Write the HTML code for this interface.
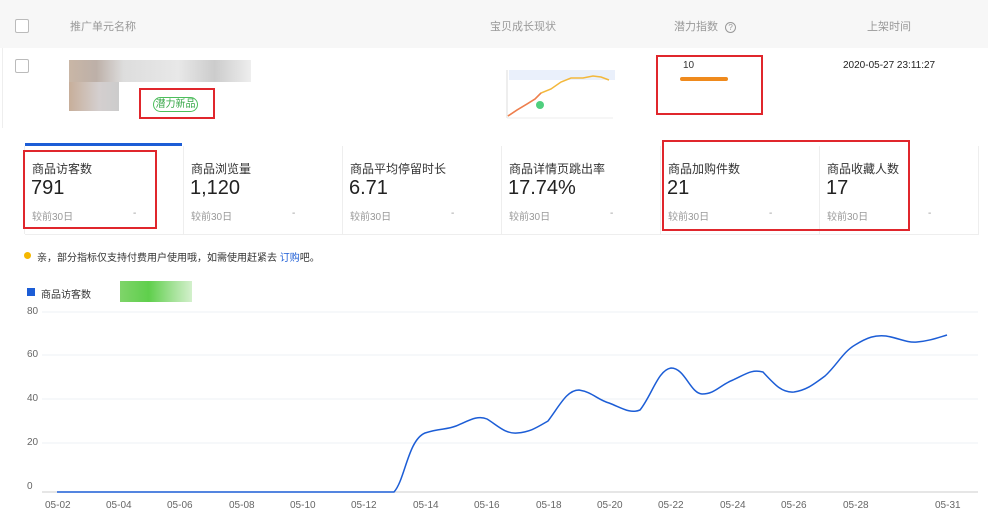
<!DOCTYPE html>
<html><head><meta charset="utf-8"><style>
body{margin:0;width:988px;height:525px;background:#fff;font-family:"Liberation Sans","Noto Sans CJK SC",sans-serif;position:relative;overflow:hidden;color:#333}
.a{position:absolute}
.cb{position:absolute;width:12px;height:12px;border:1px solid #bbb;border-radius:2px;background:#fff}
.h{font-size:11px;color:#999}
.card{position:absolute;top:146px;height:88px;width:158px;border-right:1px solid #eee;border-bottom:1px solid #eee}
.card .t{position:absolute;left:7px;top:14px;font-size:12px;color:#333}
.card .v{position:absolute;left:6px;top:31px;font-size:20px;color:#222}
.card .c{position:absolute;left:7px;top:62px;font-size:10px;color:#999}
.card .d{position:absolute;left:108px;top:62px;font-size:10px;color:#999}
.red{position:absolute;border:2px solid #e0262c}
.yl{position:absolute;left:27px;font-size:10px;color:#666}
.xl{position:absolute;top:500px;font-size:10px;color:#666}
</style></head><body>
<div class="a" style="left:0;top:0;width:988px;height:48px;background:#f7f7f7"></div>
<div class="a" style="left:2px;top:48px;width:1px;height:80px;background:#eee"></div>
<div class="cb" style="left:15px;top:19px"></div>
<div class="a h" style="left:70px;top:18px">推广单元名称</div>
<div class="a h" style="left:490px;top:18px">宝贝成长现状</div>
<div class="a h" style="left:674px;top:18px">潜力指数 <span style="display:inline-block;width:9px;height:9px;border:1px solid #999;border-radius:50%;font-size:8px;line-height:9px;text-align:center;margin-left:4px">?</span></div>
<div class="a h" style="left:867px;top:18px">上架时间</div>
<div class="cb" style="left:15px;top:59px"></div>
<div class="a" style="left:69px;top:60px;width:182px;height:22px;background:linear-gradient(90deg,#c9b6a6,#bdb0a8 15%,#ddd 30%,#e8e8e8 60%,#ccc 80%,#eee)"></div>
<div class="a" style="left:69px;top:82px;width:50px;height:29px;background:linear-gradient(90deg,#c7ae9a,#d4cfcf 60%,#ccc)"></div>
<div class="a" style="left:153px;top:97px;width:43px;height:13px;border:1px solid #4cbf5b;border-radius:8px;font-size:10px;line-height:13px;text-align:center;color:#3aa84a">潜力新品</div>
<div class="red" style="left:139px;top:88px;width:72px;height:27px"></div>
<svg class="a" style="left:505px;top:68px" width="110" height="52">
<rect x="4" y="2" width="106" height="10" fill="#eaf0fb"/>
<line x1="2" y1="2" x2="2" y2="50" stroke="#ddd"/><line x1="2" y1="50" x2="108" y2="50" stroke="#eee"/>
<path d="M3 48 L12 42 L22 36 L30 31 L36 25 L46 21 L56 14 L66 10 L78 10 L88 8 L96 9 L104 12" fill="none" stroke="#f3b83c" stroke-width="1.5"/>
<path d="M3 48 L12 42 L22 36 L30 31 L36 25" fill="none" stroke="#ee7c52" stroke-width="1.5"/>
<circle cx="35" cy="37" r="4" fill="#4fcf7e"/></svg>
<div class="a" style="left:683px;top:60px;font-size:10px;color:#333">10</div>
<div class="a" style="left:680px;top:77px;width:48px;height:4px;background:#ef8a1d;border-radius:2px"></div>
<div class="red" style="left:656px;top:55px;width:103px;height:56px"></div>
<div class="a" style="left:843px;top:60px;font-size:10px;color:#222">2020-05-27 23:11:27</div>
<div class="a" style="left:25px;top:143px;width:157px;height:3px;background:#1c5dd6"></div>
<div class="a" style="left:24px;top:146px;width:1px;height:88px;background:#eee"></div>
<div class="card" style="left:25px"><div class="t">商品访客数</div><div class="v">791</div><div class="c">较前30日</div><div class="d">-</div></div>
<div class="card" style="left:184px"><div class="t">商品浏览量</div><div class="v">1,120</div><div class="c">较前30日</div><div class="d">-</div></div>
<div class="card" style="left:343px"><div class="t">商品平均停留时长</div><div class="v">6.71</div><div class="c">较前30日</div><div class="d">-</div></div>
<div class="card" style="left:502px"><div class="t">商品详情页跳出率</div><div class="v">17.74%</div><div class="c">较前30日</div><div class="d">-</div></div>
<div class="card" style="left:661px"><div class="t">商品加购件数</div><div class="v">21</div><div class="c">较前30日</div><div class="d">-</div></div>
<div class="card" style="left:820px"><div class="t">商品收藏人数</div><div class="v">17</div><div class="c">较前30日</div><div class="d">-</div></div>
<div class="red" style="left:23px;top:150px;width:130px;height:75px"></div>
<div class="red" style="left:662px;top:140px;width:244px;height:87px"></div>
<div class="a" style="left:24px;top:252px;width:7px;height:7px;border-radius:50%;background:#f5b800"></div>
<div class="a" style="left:37px;top:249px;font-size:10px;color:#333">亲，部分指标仅支持付费用户使用哦，如需使用赶紧去 <span style="color:#1c5dd6">订购</span>吧。</div>
<div class="a" style="left:27px;top:288px;width:8px;height:8px;background:#1c5dd6"></div>
<div class="a" style="left:41px;top:286px;font-size:10px;color:#333">商品访客数</div>
<div class="a" style="left:120px;top:281px;width:72px;height:21px;background:linear-gradient(90deg,#7fd46a,#5fcf4c 40%,#a6e29a 75%,#d3f0cc)"></div>
<div class="yl" style="top:306px">80</div><div class="yl" style="top:349px">60</div><div class="yl" style="top:393px">40</div><div class="yl" style="top:437px">20</div><div class="yl" style="top:481px">0</div>
<svg class="a" style="left:0;top:0" width="988" height="525">
<g stroke="#eef0f4"><line x1="42" y1="312" x2="978" y2="312"/><line x1="42" y1="355" x2="978" y2="355"/><line x1="42" y1="399" x2="978" y2="399"/><line x1="42" y1="443" x2="978" y2="443"/></g>
<line x1="42" y1="492" x2="978" y2="492" stroke="#ccc"/>
<path d="M57 492 L394 492 C405 480 408 440 425 433 C440 428 446 430 456 426 C470 420 478 415 487 419 C497 425 505 434 517 433 C530 432 536 428 548 421 C560 405 567 390 579 390 C592 392 598 400 609 403 C622 408 630 414 640 410 C652 395 658 370 671 368 C685 368 690 393 702 394 C715 394 720 385 733 380 C746 374 752 369 763 372 C775 385 782 393 794 392 C807 390 814 384 825 376 C837 365 843 352 855 345 C868 337 875 335 886 336 C899 338 906 343 917 342 C929 341 937 338 947 335" fill="none" stroke="#1c5dd6" stroke-width="1.5"/>
</svg>
<div class="xl" style="left:45px">05-02</div><div class="xl" style="left:106px">05-04</div><div class="xl" style="left:167px">05-06</div><div class="xl" style="left:229px">05-08</div><div class="xl" style="left:290px">05-10</div><div class="xl" style="left:351px">05-12</div><div class="xl" style="left:413px">05-14</div><div class="xl" style="left:474px">05-16</div><div class="xl" style="left:536px">05-18</div><div class="xl" style="left:597px">05-20</div><div class="xl" style="left:658px">05-22</div><div class="xl" style="left:720px">05-24</div><div class="xl" style="left:781px">05-26</div><div class="xl" style="left:843px">05-28</div><div class="xl" style="left:935px">05-31</div>
</body></html>
